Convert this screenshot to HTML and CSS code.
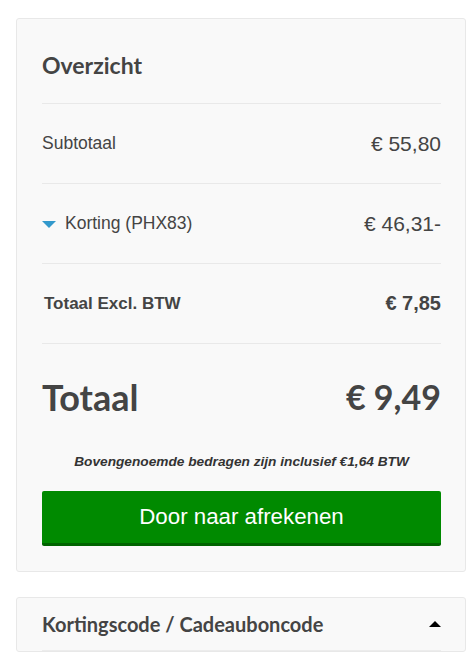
FILE: index.html
```html
<!DOCTYPE html>
<html lang="nl">
<head>
<meta charset="utf-8">
<title>Overzicht</title>
<link rel="stylesheet" href="styles.css">
</head>
<body>
<div class="page">
  <section class="card summary">
    <h2 class="card-title">Overzicht</h2>
    <div class="row">
      <span class="label">Subtotaal</span>
      <span class="amount">€ 55,80</span>
    </div>
    <div class="row">
      <span class="label discount"><span class="caret-down"></span>Korting (PHX83)</span>
      <span class="amount">€ 46,31-</span>
    </div>
    <div class="row strong">
      <span class="label">Totaal Excl. BTW</span>
      <span class="amount">€ 7,85</span>
    </div>
    <div class="grand">
      <span class="grand-label">Totaal</span>
      <span class="grand-amount">€ 9,49</span>
    </div>
    <p class="note">Bovengenoemde bedragen zijn inclusief €1,64 BTW</p>
    <button class="checkout" type="button">Door naar afrekenen</button>
  </section>
  <section class="card coupon">
    <div class="coupon-head">
      <h3 class="coupon-title">Kortingscode / Cadeauboncode</h3>
      <span class="caret-up"></span>
    </div>
  </section>
</div>
</body>
</html>
```
FILE: styles.css
```css
* { box-sizing: border-box; }
html, body { margin: 0; padding: 0; background: #fff; }
body { font-family: "Liberation Sans", Arial, sans-serif; color: #444; }
.page { padding: 18px 5px 0 16px; display: flex; flex-direction: column; gap: 25px; }
.card {
  width: 450px;
  background: #f9f9f9;
  border: 1px solid #e8e8e8;
  border-radius: 3px;
  padding: 0 24px 0 25px;
}
.summary { padding-bottom: 25px; }
.card-title {
  margin: 0;
  padding: 31px 0 23px;
  font-family: Lato, sans-serif;
  font-weight: 700;
  font-size: 23px;
  line-height: 30px;
  color: #444;
  border-bottom: 1px solid #e9e9e9;
}
.row {
  display: flex;
  justify-content: space-between;
  align-items: center;
  height: 80px;
  border-bottom: 1px solid #e9e9e9;
}
.label { font-size: 17.5px; }
.amount { font-size: 21px; }
.strong .label { font-weight: 700; font-size: 17px; padding-left: 2px; }
.strong .amount { font-weight: 700; font-size: 20px; }
.discount { display: flex; align-items: center; }
.caret-down {
  width: 0; height: 0;
  border-left: 7px solid transparent;
  border-right: 7px solid transparent;
  border-top: 7px solid #3399cc;
  margin-right: 9px;
  margin-top: 2px;
}
.grand {
  display: flex;
  justify-content: space-between;
  align-items: center;
  padding-top: 29px;
  height: 76px;
  font-family: Lato, sans-serif;
  font-weight: 700;
  font-size: 36px;
  line-height: 44px;
  color: #444;
}
.grand-amount { font-weight: 700; font-size: 34px; }
.note {
  margin: 34px 0 0;
  text-align: center;
  font-size: 13.7px;
  line-height: 16px;
  font-style: italic;
  font-weight: 700;
  color: #333;
}
.checkout {
  display: block;
  width: 100%;
  margin-top: 21px;
  height: 55px;
  background: #008a00;
  color: #fff;
  border: 0;
  border-bottom: 3px solid #006400;
  border-radius: 2px;
  font-family: "Liberation Sans", Arial, sans-serif;
  font-size: 22.3px;
  padding: 0 0 1px;
}
.coupon { height: 55px; }
.coupon-head {
  display: flex;
  justify-content: space-between;
  align-items: center;
  height: 53px;
  padding-top: 0;
  border-bottom: 1px solid #ececec;
}
.coupon-title {
  margin: 0;
  font-family: Lato, sans-serif;
  font-weight: 700;
  font-size: 20px;
  color: #444;
}
.caret-up {
  width: 0; height: 0;
  border-left: 6px solid transparent;
  border-right: 6px solid transparent;
  border-bottom: 6px solid #000;
  margin-right: 0;
}
```
